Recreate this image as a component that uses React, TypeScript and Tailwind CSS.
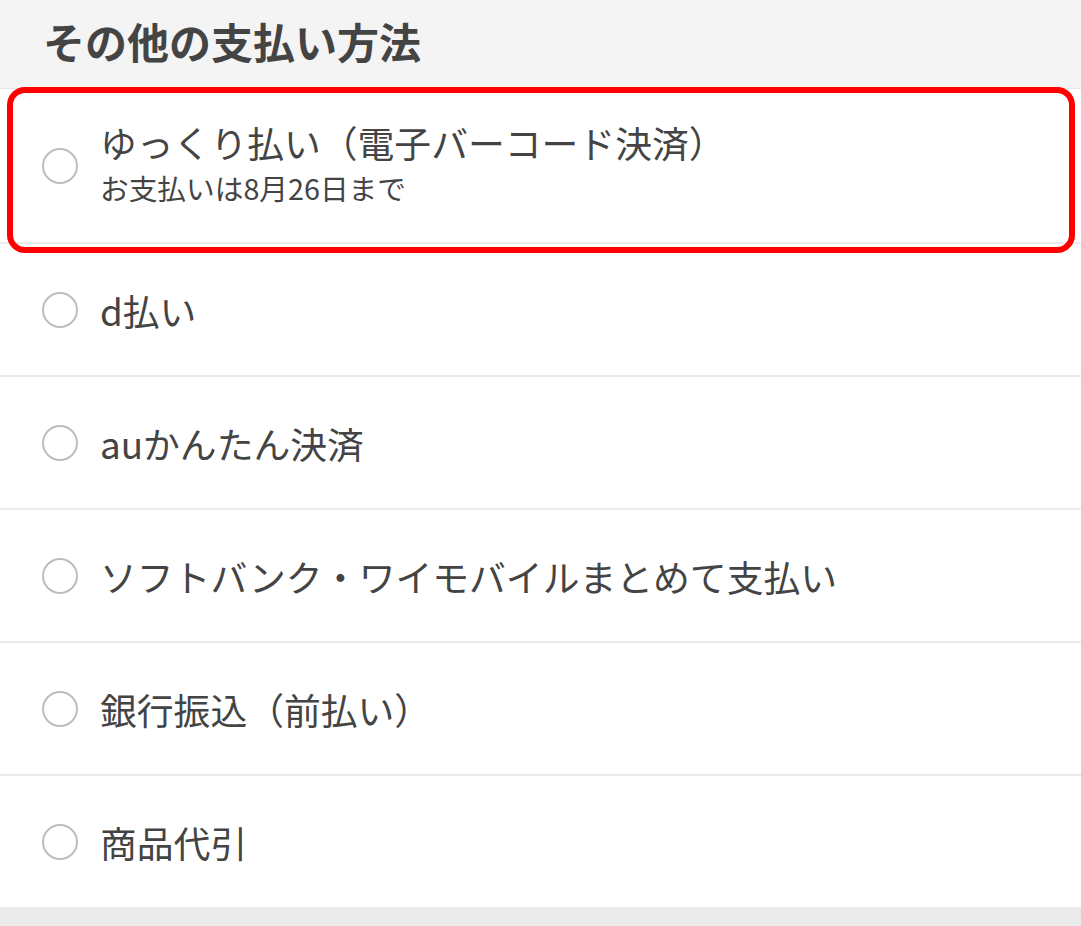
import React from 'react';

const font = { fontFamily: '"Noto Sans CJK JP", "Noto Sans", sans-serif' };

type Method = { label: string; note?: string };

const methods: Method[] = [
  { label: 'ゆっくり払い（電子バーコード決済）', note: 'お支払いは8月26日まで' },
  { label: 'd払い' },
  { label: 'auかんたん決済' },
  { label: 'ソフトバンク・ワイモバイルまとめて支払い' },
  { label: '銀行振込（前払い）' },
  { label: '商品代引' },
];

function Radio() {
  return <span className="block w-[36px] h-[36px] shrink-0 rounded-full border-2 border-[#bdbdbd] bg-white" />;
}

export default function App() {
  return (
    <div className="w-[1081px] h-[926px] bg-[#ebebeb] text-[#444444] overflow-hidden relative" style={font}>
      {/* section header */}
      <div className="h-[89px] bg-[#f4f4f4] border-b border-[#e6e6e6] flex items-center pl-[43px] pb-[6px]">
        <h2 className="text-[42px] font-bold leading-none">その他の支払い方法</h2>
      </div>

      <ul className="bg-white">
        {methods.map((m, i) => (
          <li
            key={m.label}
            className={`flex items-center pl-[42px] gap-[22px] border-b-2 border-[#ebebeb] ${i === 0 ? 'h-[155px]' : 'h-[133px]'} ${i === methods.length - 1 ? 'border-b-0 h-[132px]' : ''}`}
          >
            <Radio />
            <div className="flex flex-col">
              <span className={`text-[36.8px] ${m.note ? 'leading-[40px] -mt-[4px]' : 'leading-[44px]'}`}>{m.label}</span>
              {m.note && <span className="text-[28.7px] leading-[36px] mt-[8px]">{m.note}</span>}
            </div>
          </li>
        ))}
      </ul>

      {/* highlight annotation */}
      <div className="absolute left-[7px] top-[87px] w-[1068px] h-[166px] border-[6px] border-[#ff0000] rounded-[18px] pointer-events-none" />
    </div>
  );
}
